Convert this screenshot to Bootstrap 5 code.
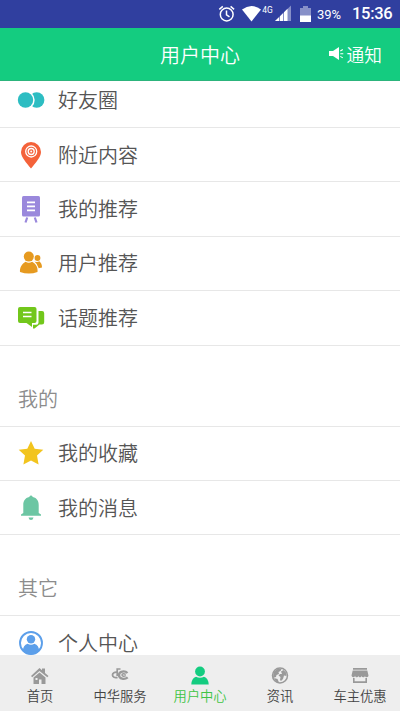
<!DOCTYPE html>
<html lang="zh-CN">
<head>
<meta charset="utf-8">
<meta name="viewport" content="width=device-width, initial-scale=1">
<title>用户中心</title>
<link href="https://cdn.jsdelivr.net/npm/bootstrap@5.3.0/dist/css/bootstrap.min.css" rel="stylesheet">
<style>
body{font-family:"Noto Sans CJK SC","Noto Sans",sans-serif;font-weight:350;height:711px;overflow:hidden;background:#fff;color:#555}
svg{display:block;flex:none}
.statusbar{height:28px;background:#303f9f;font-family:Roboto,sans-serif;color:#fff;padding-right:10px}
.statusbar .pct{font-size:13px;font-weight:400;width:24px;white-space:nowrap;padding-top:1px}
.statusbar .clock{font-size:16.5px;font-weight:500;margin-left:11px;width:38px;white-space:nowrap;letter-spacing:-.3px;padding-top:1px}
.titlebar{height:53px;background:#14cc80;color:#fff;font-size:20px;line-height:53px;border-bottom:1px solid #2cb47c}
.notice{font-size:17.7px;padding-right:18px;gap:3px}
.content-area{height:574px}
.menu{margin-top:-7.6px}
.entry{height:54.45px;font-size:20px;line-height:30px;padding:0 0 0 17px;gap:13px;border-bottom:1px solid #e7e7e7}
.group-title{height:81px;font-size:20px;line-height:30px;padding:0 0 12px 18px;color:#8c8c8c;border-bottom:1px solid #e7e7e7}
.tabs{height:56px;background:#eee;font-size:13.3px;color:#444}
.tabs a{color:inherit;line-height:20px;padding-top:11px;gap:1px}
.tabs a.current{color:#3ec445}
</style>
<script src="https://cdn.jsdelivr.net/npm/bootstrap@5.3.0/dist/js/bootstrap.bundle.min.js"></script>
</head>
<body class="d-flex flex-column">
<div class="statusbar d-flex align-items-center justify-content-end flex-shrink-0">
<svg width="117" height="28" viewBox="200 0 117 28">
<g fill="none" stroke="#fff" stroke-width="1.500"><circle cx="226.700" cy="14.500" r="6.400"/><path d="M226.500 10.500v4.300l3 2M219.300 9.400l3.500-3M230.600 6.400l3.500 3"/></g>
<path fill="#fff" d="M242 9.500Q251.500 2.500 261 9.500L251.500 21.500Z"/>
<text x="262.300" y="13" font-size="9" font-weight="400" fill="#fff" textLength="10.500" lengthAdjust="spacingAndGlyphs">4G</text>
<path fill="#8790c8" d="M291 5.500V21h-16z"/><path fill="#fff" d="M275 21l4-3.800V21zM280 21v-4.800l3-3V21zM284 21v-8.800l3.500-3.500V21z"/>
<path fill="#8790c8" d="M300 8h3V6h5v2h3v8h-11z"/><path fill="#fff" d="M300 15.500h11V22h-11z"/>
</svg>
<span class="pct">39%</span><span class="clock">15:36</span>
</div>
<header class="titlebar d-flex flex-shrink-0">
<div class="col-4"></div><div class="col-4 text-center">用户中心</div>
<div class="notice col-4 d-flex justify-content-end align-items-center">
<svg width="16" height="16" viewBox="0 0 16 16"><path fill="#fff" d="M1 5h4l6-4v13l-6-4H1z"/><path stroke="#fff" stroke-width="1.100" d="M12.300 5l2.500-1.500M12.300 7.700h3M12.300 10.400l2.500 1.500"/></svg>
<span>通知</span></div>
</header>
<main class="content-area overflow-hidden flex-shrink-0">
<div class="menu">
<div class="entry d-flex align-items-center"><svg width="28" height="28" viewBox="0 0 28 28"><circle cx="19.700" cy="14" r="7.700" fill="#2dbdc2"/><circle cx="8.500" cy="14" r="9.200" fill="#fff"/><circle cx="8.500" cy="14" r="7.700" fill="#2dbdc2"/></svg>好友圈</div>
<div class="entry d-flex align-items-center"><svg width="28" height="28" viewBox="0 0 28 28"><path fill="#f4623a" d="M14 1a10 10 0 0 1 10 10c0 5-5.500 11-10 16.500C9.500 22 4 16 4 11A10 10 0 0 1 14 1z"/><g fill="none" stroke="#fff" stroke-width="1.300"><circle cx="14.200" cy="10.500" r="5.500"/><circle cx="14.200" cy="10.500" r="3"/></g><circle cx="14.200" cy="10.500" r="1" fill="#fff"/></svg>附近内容</div>
<div class="entry d-flex align-items-center"><svg width="28" height="28" viewBox="0 0 28 28"><rect x="5" y="1" width="18" height="20.500" rx="1.500" fill="#9a88dc"/><path stroke="#fff" stroke-width="1.800" d="M10 7.300h8M10 11.300h8M10 15.300h8"/><path stroke="#9a88dc" stroke-width="2.200" d="M10.200 22.500l-1.700 5M17.800 22.500l1.700 5"/></svg>我的推荐</div>
<div class="entry d-flex align-items-center"><svg width="28" height="28" viewBox="0 0 28 28"><g fill="#e69a20"><circle cx="11.800" cy="7.600" r="5"/><path d="M8.500 12.800q3.300 2 6.600 0C19.500 15 21 19 20.500 23Q12 26 3 23C2.700 19 4.500 15 8.500 12.800z"/><circle cx="20.500" cy="9" r="2.900"/><path d="M17.500 12.500q3 1.200 4.800-.2 2.700 2 2.700 6.200l-3.300.8Q20.500 15 17.500 12.500z"/></g></svg>用户推荐</div>
<div class="entry d-flex align-items-center"><svg width="28" height="28" viewBox="0 0 28 28"><g fill="#72c71b"><path d="M3 3h14.500a2 2 0 0 1 2 2v12a2 2 0 0 1-2 2H15v4l-5.500-4H3a2 2 0 0 1-2-2V5a2 2 0 0 1 2-2z"/><path d="M21.500 7H25a2.200 2.200 0 0 1 2.200 2.200v9A2.200 2.200 0 0 1 25 20.400h-2.500L17.500 24.500h-1.500v-3.700h3.300a2.200 2.200 0 0 0 2.200-2.200z"/></g><path stroke="#fff" stroke-width="1.700" d="M6 8.500h8.500M6 12.500h8.500"/></svg>话题推荐</div>
<div class="group-title d-flex align-items-end">我的</div>
<div class="entry d-flex align-items-center"><svg width="28" height="28" viewBox="0 0 28 28"><path fill="#f2c41e" d="M14 2l3.700 7.700 8.600 1-6.300 5.900 1.600 8.900L14 21.500l-7.600 4 1.600-8.900-6.300-5.900 8.600-1z"/></svg>我的收藏</div>
<div class="entry d-flex align-items-center"><svg width="28" height="28" viewBox="0 0 28 28"><path fill="#6cc6a3" d="M12.200 3Q14 .2 15.800 3C20 4 21.700 7 21.700 11v8l2.300 1.400v1.400H4v-1.400L6.300 19v-8c0-4 1.700-7 5.900-8zM11.500 23.500h5q-.5 2.500-2.500 2.500t-2.500-2.500z"/></svg>我的消息</div>
<div class="group-title d-flex align-items-end">其它</div>
<div class="entry d-flex align-items-center"><svg width="28" height="28" viewBox="0 0 28 28"><circle cx="14" cy="14" r="11" fill="#fff" stroke="#5c9fea" stroke-width="1.900"/><g fill="#5c9fea"><circle cx="14" cy="10.200" r="4.200"/><path d="M10.500 14.800q3.500 1.700 7 0 4.300 1.500 4.800 7.200-3.600 3.500-8.300 3.500T5.700 22q.5-5.700 4.800-7.200z"/></g></svg>个人中心</div>
</div>
</main>
<nav class="tabs row g-0 flex-shrink-0 text-center">
<a class="col d-flex flex-column align-items-center text-decoration-none" href="#"><svg width="20" height="19" viewBox="0 0 20 19"><path fill="#999" d="M9.500 2l2.500 2.200V2.500h3v4.500l3.500 3-1.200 1.200L9.500 5l-7.300 6.200L1 10zM9.500 6.500l6 5V18h-4v-4.500H9V18H3.500v-6.500z"/><path fill="#eee" d="M5.500 12h2v2h-2z"/></svg><span>首页</span></a>
<a class="col d-flex flex-column align-items-center text-decoration-none" href="#"><svg width="20" height="19" viewBox="0 0 20 19"><g fill="none" stroke="#999"><path stroke-width="1.800" d="M7.500 6.200C4.500 5.700 2.500 7 2.500 9s2.500 3.200 5 2.300"/><path stroke-width="1.700" d="M7.200 2.200V10M6.500 3h4"/><path stroke-width="2.300" d="M17.500 7C15 4.500 9 5 9 9s5.500 5 8.700 2.300"/><path stroke-width="1.500" d="M15.800 8.300c-2-1-3.800-.7-3.800.8s2 1.600 3.800.6"/></g></svg><span>中华服务</span></a>
<a class="current col d-flex flex-column align-items-center text-decoration-none" href="#"><svg width="20" height="19" viewBox="0 0 20 19"><g fill="#14cc80"><circle cx="10" cy="5.500" r="4.900"/><path d="M6 10.700q4 2 8 0 4.500 1.700 4.700 7.800H1.300q.2-6.100 4.700-7.800z"/></g></svg><span>用户中心</span></a>
<a class="col d-flex flex-column align-items-center text-decoration-none" href="#"><svg width="20" height="19" viewBox="0 0 20 19"><circle cx="10" cy="9.500" r="7.500" fill="#eee" stroke="#999" stroke-width="1.500"/><path fill="#999" d="M3.500 6L8 2.500l3.500.5-1 2-2 1 .5 2-2.500 1L6 11l-3 1zM11 5.500L13.500 4l3 3v3l-2.500-.5-1 3.500-2 2-1-1 .5-3-2-1.500L10 8h2zM4 12l3.500 1 1.500 3.500-3-.5z"/></svg><span>资讯</span></a>
<a class="col d-flex flex-column align-items-center text-decoration-none" href="#"><svg width="20" height="19" viewBox="0 0 20 19"><g fill="#999"><path d="M3 2h14v1.700H3zM2.700 4.500h14.600l1.200 5q0 1.800-1.800 1.800T15 9.800q-.2 1.500-1.700 1.500t-1.600-1.500q-.2 1.500-1.700 1.500T8.300 9.800Q8 11.300 6.700 11.300T5 9.800q-.2 1.500-1.700 1.500T1.500 9.500zM3 12h1.600v3.300h10.800V12H17v5H3z"/></g></svg><span>车主优惠</span></a>
</nav>
</body>
</html>
